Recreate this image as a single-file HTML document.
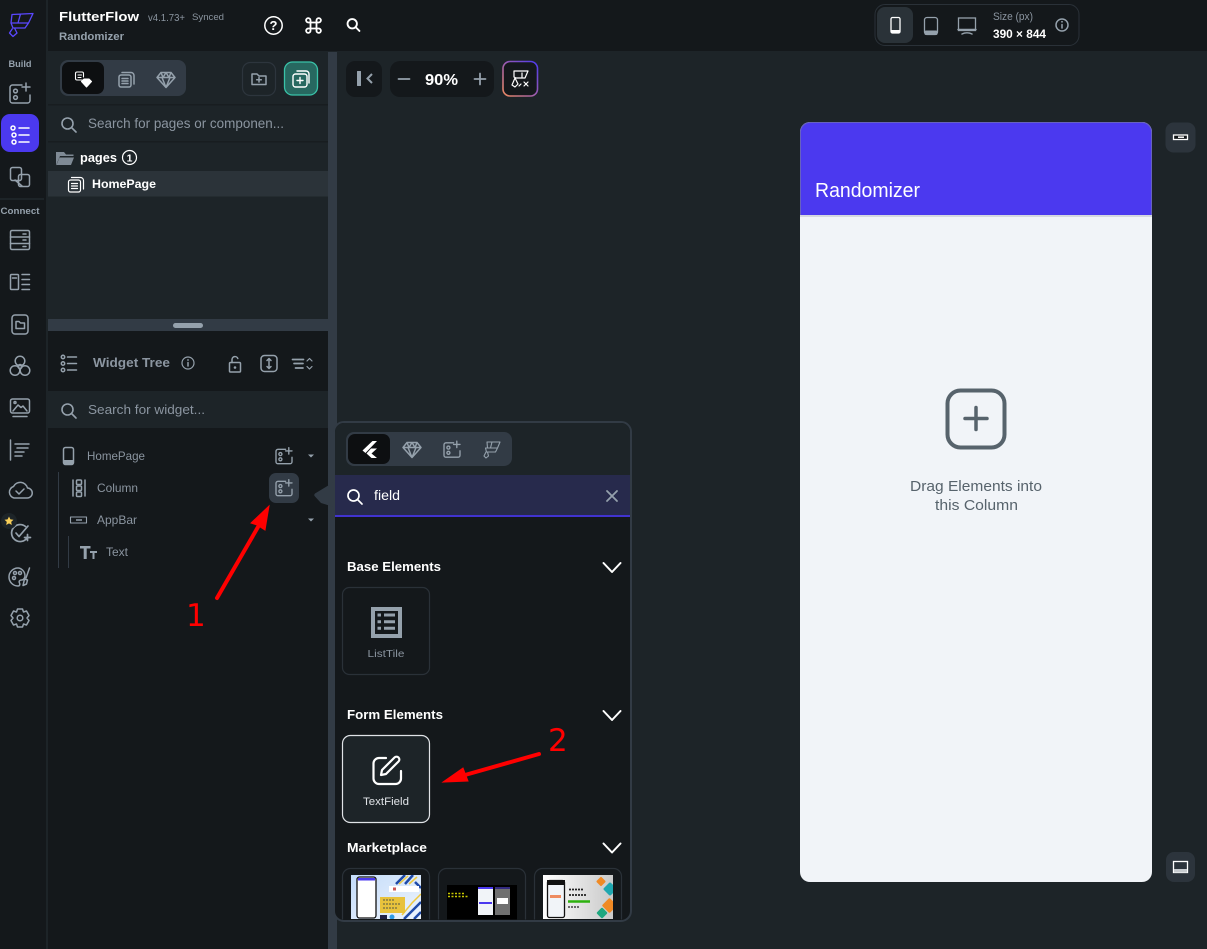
<!DOCTYPE html>
<html><head><meta charset="utf-8"><title>FlutterFlow</title>
<style>
html,body{margin:0;padding:0;background:#1d2428;width:1207px;height:949px;overflow:hidden}
svg{display:block;font-family:"Liberation Sans",sans-serif}
.i{fill:none;stroke:#95a1ac;stroke-width:1.500;stroke-linecap:round;stroke-linejoin:round}
.w{fill:none;stroke:#fff;stroke-width:1.500;stroke-linecap:round;stroke-linejoin:round}
.t{fill:#8b95a0;font-size:12px}
.b{fill:#fff;font-weight:bold;font-size:13px}
</style></head><body>
<svg width="1207" height="949" viewBox="0 0 1207 949" xmlns="http://www.w3.org/2000/svg">
<defs>
<g id="add"><path d="M2-9H-7.500a2.500 2.500 0 0 0-2.500 2.500V6.500a2.500 2.500 0 0 0 2.500 2.500H7.500a2.500 2.500 0 0 0 2.500-2.500V1"/><circle cx="-4.500" cy="-3" r="1.900"/><circle cx="-4.500" cy="3.500" r="1.900"/><path d="M6-11v8M2-7h8"/></g>
<g id="gem"><path d="M-5-7H5L9-2 0 8-9-2ZM-9-2H9M-4-2 0 8 4-2M-5-7-3-2M5-7 3-2M0-7-3-2M0-7 3-2"/></g>
<g id="srch"><circle cx="-1.500" cy="-1.500" r="5.500"/><path d="M2.500 2.500 7 7"/></g>
<g id="pg"><rect x="-7" y="-5" width="12" height="12" rx="2"/><path d="M-4-1.500h6M-4 1h6M-4 3.500h6M-4-7.500H5a3 3 0 0 1 3 3V4"/></g>
<path id="chev" d="M-8.500-4.500 0 4.500 8.500-4.500" fill="none" stroke="#fff" stroke-width="2" stroke-linecap="round" stroke-linejoin="round"/>
<path id="caret" d="M-3-1.500H3L0 1.500Z" fill="#95a1ac"/>
<linearGradient id="mg" x1="0" y1="1" x2="1" y2="0"><stop offset="0" stop-color="#ee8b60"/><stop offset=".5" stop-color="#9a5bb0"/><stop offset="1" stop-color="#4b39ef"/></linearGradient>
<linearGradient id="t1" x1="0" y1="0" x2="1" y2="1"><stop offset="0" stop-color="#c4dcfa"/><stop offset="1" stop-color="#eef4fc"/></linearGradient>
<linearGradient id="t3" x1="0" y1="0" x2="1" y2="0"><stop offset="0" stop-color="#fff"/><stop offset="1" stop-color="#c9c9c9"/></linearGradient>
<clipPath id="thumbs"><rect x="336" y="860" width="294" height="59.500"/></clipPath>
<clipPath id="pop"><rect x="335" y="423" width="295" height="497" rx="9"/></clipPath>
<clipPath id="c1"><rect x="351" y="875" width="70" height="44"/></clipPath>
<clipPath id="c3"><rect x="543" y="875" width="70" height="44"/></clipPath>
</defs>

<!-- base regions -->
<rect width="1207" height="949" fill="#1d2428"/>
<rect width="1207" height="51" fill="#14181b"/>
<rect width="46" height="949" fill="#14181b"/>
<rect x="46" y="0" width="2" height="949" fill="#1d2428"/>
<rect x="328" y="52" width="9" height="897" fill="#323b45"/>
<rect x="48" y="51" width="280" height="268" fill="#1d2428"/>
<rect x="48" y="319" width="280" height="12" fill="#323b45"/>
<rect x="173" y="323" width="30" height="5" rx="2.500" fill="#95a1ac"/>
<rect x="48" y="331" width="280" height="60" fill="#14181b"/>
<rect x="48" y="391" width="280" height="37" fill="#1d2428"/>
<rect x="48" y="428" width="280" height="521" fill="#14181b"/>

<!-- top bar -->
<text x="59" y="21" class="b" textLength="80" lengthAdjust="spacingAndGlyphs">FlutterFlow</text>
<text x="148" y="21" fill="#8b95a0" font-size="10" textLength="37" lengthAdjust="spacingAndGlyphs">v4.1.73+</text>
<text x="192" y="20" fill="#8b95a0" font-size="9.500" textLength="32" lengthAdjust="spacingAndGlyphs">Synced</text>
<text x="59" y="40" fill="#95a1ac" font-size="11" font-weight="bold" textLength="65" lengthAdjust="spacingAndGlyphs">Randomizer</text>
<circle cx="273.500" cy="25.500" r="8.700" class="w"/>
<text x="273.500" y="30" text-anchor="middle" fill="#fff" font-size="13" font-weight="bold">?</text>
<path class="w" style="stroke-width:1.800" d="M310.500 22.500v6M316.500 22.500v6M310.500 22.500h6M310.500 28.500h6M310.500 22.500h-2a2.200 2.200 0 1 1 2-2.200v2.200M316.500 22.500v-2.200a2.200 2.200 0 1 1 2 2.200h-2M310.500 28.500v2.200a2.200 2.200 0 1 1-2-2.200h2M316.500 28.500h2a2.200 2.200 0 1 1-2 2.200v-2.200"/>
<use href="#srch" transform="translate(353.500 25) scale(.85)" class="w" style="stroke-width:2.200"/>

<!-- device box -->
<rect x="875" y="4.500" width="204" height="41" rx="10" fill="#14181b" stroke="#2a3138"/>
<rect x="877" y="7" width="36" height="36" rx="8" fill="#2a3238"/>
<rect x="891" y="17.500" width="9" height="15.500" rx="1.500" fill="none" stroke="#fff" stroke-width="1.300"/><rect x="891" y="30" width="9" height="3" fill="#fff"/>
<rect x="924.500" y="17.500" width="13" height="17" rx="2.500" fill="none" stroke="#95a1ac" stroke-width="1.300"/><rect x="924.500" y="30.500" width="13" height="4.500" rx="1.500" fill="#95a1ac"/>
<rect x="958.500" y="18" width="17" height="12.500" fill="none" stroke="#95a1ac" stroke-width="1.300"/><path d="M958 29.500h18M962 34c3-1.500 7-1.500 10 0" class="i"/>
<text x="993" y="20" fill="#8b95a0" font-size="11" textLength="40" lengthAdjust="spacingAndGlyphs">Size (px)</text>
<text x="993" y="38" fill="#fff" font-size="11.500" font-weight="bold" textLength="53" lengthAdjust="spacingAndGlyphs">390 × 844</text>
<circle cx="1062" cy="25" r="6" class="i"/><path d="M1062 24.500v3.500" class="i"/><circle cx="1062" cy="21.800" r=".9" fill="#95a1ac"/>

<!-- left rail -->
<g fill="none" stroke="#5a48ff" stroke-width="1.300" stroke-linejoin="round">
<path d="M12 14.500 33 13.500 28.500 23H11ZM20.500 14 18 23M11 23h17.500L25 28H13ZM12.500 28.500 9.500 33 13 36.500 17 33 14.500 28"/>
</g>
<text x="20" y="67" text-anchor="middle" fill="#95a1ac" font-size="9" font-weight="bold" textLength="23" lengthAdjust="spacingAndGlyphs">Build</text>
<use href="#add" x="20" y="94" class="i"/>
<rect x="1" y="114" width="38" height="38" rx="9" fill="#4b39ef"/>
<g fill="none" stroke="#fff" stroke-width="1.500" stroke-linecap="round">
<circle cx="13" cy="128" r="2"/><circle cx="14" cy="135" r="2"/><circle cx="14" cy="142" r="2"/><path d="M19 128h10M19 135h10M19 142h10"/></g>
<g class="i"><rect x="10.500" y="167.500" width="11" height="13" rx="2"/><rect x="18.500" y="174.500" width="11" height="12" rx="2"/><path d="M15 180 22 186"/></g>
<rect x="0" y="198" width="44" height="2" fill="#1d2428"/>
<text x="20" y="214" text-anchor="middle" fill="#95a1ac" font-size="9" font-weight="bold" textLength="39" lengthAdjust="spacingAndGlyphs">Connect</text>
<g class="i">
<rect x="10.500" y="230.500" width="19" height="19" rx="1.500"/><path d="M10.500 237h19M10.500 243.500h19M23 234h3M23 240h3M23 246.500h3"/>
<rect x="10.500" y="274.500" width="8" height="15" rx="1"/><path d="M22 274.500h7.500M22 279.500h7.500M22 284.500h7.500M22 289.500h7.500M12.500 278h4"/>
<rect x="12" y="315" width="16" height="19" rx="3"/><path d="M16 321.500h3l1.500 1.500h4v5.500H16Z"/>
<circle cx="20" cy="361" r="4.800"/><circle cx="15" cy="370.500" r="4.800"/><circle cx="25" cy="370.500" r="4.800"/><circle cx="20" cy="366.500" r="2"/>
<rect x="10.500" y="399" width="19" height="14" rx="2"/><path d="M13 411l5-6 3 2.500 2-1.500 4 5M13 416.500h14"/><circle cx="15" cy="402.500" r="1"/>
<path d="M10.500 440v20M15 444h14M17 448h11M15 452h9M15 456h7"/>
<path d="M14 498h13a5 5 0 0 0 .5-10 7.500 7.500 0 0 0-14-1.500 6 6 0 0 0 .5 11.500ZM16 491l3 3 5-5"/>
<path style="stroke-width:1.700" d="M25.500 526.500a8.500 8.500 0 1 0 1.500 11.500M16 533l3 3.500 9-10.500M24.500 537.500h6M27.500 534.500v6"/>
<path d="M18 568a9 9 0 0 0 0 18c2 0 2-2 1.500-3-1-2 .5-3 2-3 2 0 3.500-2 3.500-4 0-5-4-8-7-8Z"/><circle cx="15" cy="573" r="1.500"/><circle cx="20" cy="573" r="1.500"/><circle cx="14" cy="578" r="1.500"/><path d="M29.500 568 26 578M24.500 579l3 1-1 4-3.500 1.500Z"/>
<path d="M17.500 609h5l1 3 3-1 2.500 4.500-2 2.500 2 2.500-2.500 4.500-3-1-1 3h-5l-1-3-3 1-2.500-4.500 2-2.500-2-2.500 2.500-4.500 3 1Z"/><circle cx="20" cy="618" r="2.800"/>
</g>
<circle cx="9" cy="521" r="8" fill="#1d2428"/>
<path d="M9 516.500l1.400 2.900 3.100.4-2.300 2.100.6 3.100-2.800-1.600-2.800 1.600.6-3.100-2.300-2.100 3.100-.4Z" fill="#f9cf58"/>

<!-- panel top -->
<rect x="60" y="60" width="126" height="36" rx="8" fill="#323b45"/>
<rect x="62" y="62" width="42" height="32" rx="7" fill="#0d0f11"/>
<g class="w" style="stroke-width:1.100"><path d="M82 80h-5a1.500 1.500 0 0 1-1.500-1.500V73.500A1.500 1.500 0 0 1 77 72h5a1.500 1.500 0 0 1 1.500 1.500V77M78 75h3.500M78 77.500h3"/><path d="M84 79h5l2.500 2.500-5 5.500-5-5.500Z" fill="#fff"/></g>
<use href="#pg" x="126" y="80" class="i"/>
<use href="#gem" x="166" y="79.500" class="i"/>
<rect x="242.500" y="62.500" width="33" height="33" rx="8" fill="none" stroke="#2d353d" stroke-width="1.200"/>
<path class="i" d="M252 74h5l2 2h7v8.500h-14ZM259 77.500v4.500M256.700 79.700h4.600"/>
<rect x="284.500" y="62" width="33" height="33" rx="8" fill="#276860" stroke="#39c2a8" stroke-width="1.300"/>
<g class="w" style="stroke-width:1.400"><rect x="293" y="74" width="14" height="13" rx="2.500"/><path d="M300 77.500v6M297 80.500h6M297 71h9a3 3 0 0 1 3 3v9"/></g>
<rect x="48" y="104" width="280" height="1.500" fill="#181d20"/>
<rect x="48" y="141" width="280" height="1.500" fill="#181d20"/>
<use href="#srch" x="69" y="125" class="i" style="stroke-width:1.600"/>
<text x="88" y="128" fill="#8b95a0" font-size="13.500" textLength="196" lengthAdjust="spacingAndGlyphs">Search for pages or componen...</text>
<path d="M56 152h8l2 2.500h7.500V156H60l-4 9.500Z" fill="#7f8a95"/><path d="M59.500 157.500H74l-3 7.500H56.500Z" fill="#7f8a95"/>
<text x="80" y="162" class="b" style="font-size:12.500px" textLength="37" lengthAdjust="spacingAndGlyphs">pages</text>
<circle cx="129.500" cy="157.500" r="7" class="w" style="stroke-width:1.200"/><text x="129.500" y="161.500" text-anchor="middle" fill="#fff" font-size="10.500" font-weight="bold">1</text>
<rect x="48" y="171" width="280" height="25.500" fill="#2b3339"/>
<use href="#pg" x="75.500" y="185" class="w" style="stroke-width:1.200"/>
<text x="92" y="188" class="b" style="font-size:12px" textLength="64" lengthAdjust="spacingAndGlyphs">HomePage</text>

<!-- widget tree header -->
<g class="i"><circle cx="63" cy="357" r="1.700"/><circle cx="63" cy="363.500" r="1.700"/><circle cx="63" cy="370" r="1.700"/><path d="M67.500 357h9M67.500 363.500h9M67.500 370h9"/></g>
<text x="93" y="367" fill="#8b95a0" font-size="13" font-weight="bold" textLength="77" lengthAdjust="spacingAndGlyphs">Widget Tree</text>
<circle cx="188" cy="363" r="6" class="i" style="stroke-width:1.200"/><path d="M188 362.500v3.500" class="i"/><circle cx="188" cy="360" r=".9" fill="#95a1ac"/>
<g class="i"><rect x="229.500" y="362.500" width="11" height="9.500" rx="1"/><path d="M232 362.500v-3a3 3 0 0 1 5.800-1"/></g><circle cx="235" cy="367.500" r="1.300" fill="#95a1ac"/>
<g class="i"><rect x="261" y="355.500" width="16" height="16" rx="3.500"/><path d="M269 359v9M267 360.500l2-2 2 2M267 366.500l2 2 2-2"/></g>
<path class="i" style="stroke-width:1.700" d="M292.500 359.500h11M294 363.500h9M295.500 368h7.500"/><path class="i" style="stroke-width:1.200" d="M307 361l2.500-2.500 2.500 2.500M307 366.500l2.500 2.500 2.500-2.500"/>
<use href="#srch" x="69" y="411" class="i" style="stroke-width:1.600"/>
<text x="88" y="414" fill="#8b95a0" font-size="13" textLength="117" lengthAdjust="spacingAndGlyphs">Search for widget...</text>

<!-- tree -->
<rect x="63.500" y="447.500" width="10" height="17" rx="2" class="i"/><rect x="64" y="460" width="9" height="4" fill="#95a1ac"/>
<text x="87" y="460" class="t" font-size="11.500" textLength="58" lengthAdjust="spacingAndGlyphs">HomePage</text>
<use href="#add" transform="translate(284 456.500) scale(.8)" class="i" style="stroke-width:1.700"/>
<use href="#caret" x="311" y="456"/>
<rect x="58" y="472" width="1" height="96" fill="#323b45"/>
<g class="i"><path d="M73 480v16M85 480v16"/><rect x="76.500" y="480" width="5" height="4.500" rx="1"/><rect x="76.500" y="486" width="5" height="4.500" rx="1"/><rect x="76.500" y="492" width="5" height="4.500" rx="1"/></g>
<text x="97" y="492" class="t" textLength="41" lengthAdjust="spacingAndGlyphs">Column</text>
<rect x="269" y="473" width="30" height="30" rx="7" fill="#323b45"/>
<use href="#add" transform="translate(284 488.500) scale(.8)" class="i" style="stroke-width:1.700"/>
<rect x="70.500" y="517" width="16" height="6" class="i" style="stroke-width:1.100"/><path d="M76 520h6" stroke="#95a1ac" stroke-width="1.500"/>
<text x="97" y="524" class="t" textLength="40" lengthAdjust="spacingAndGlyphs">AppBar</text>
<use href="#caret" x="311" y="520"/>
<rect x="68" y="536" width="1" height="32" fill="#323b45"/>
<path fill="#95a1ac" d="M80 546h10.500v2.500h-3.800V559h-3v-10.500H80ZM90 551h7v2h-2.500v6h-2v-6H90Z"/>
<text x="106" y="556" class="t" textLength="22" lengthAdjust="spacingAndGlyphs">Text</text>

<!-- canvas toolbar -->
<rect x="346" y="61" width="36" height="36" rx="9" fill="#14181b"/>
<rect x="357" y="71" width="4" height="15" fill="#95a1ac" rx=".5"/><path d="M372 74 367.500 78.500 372 83" fill="none" stroke="#95a1ac" stroke-width="2"/>
<rect x="390" y="61" width="104" height="36" rx="10" fill="#14181b"/>
<path d="M398.500 79h11M474.500 79h11M480 73.500v11" stroke="#95a1ac" stroke-width="1.800" stroke-linecap="round" fill="none"/>
<text x="425" y="85" fill="#fff" font-size="16" font-weight="bold" textLength="33" lengthAdjust="spacingAndGlyphs">90%</text>
<rect x="503" y="61.500" width="34.500" height="34.500" rx="7" fill="#14181b" stroke="url(#mg)" stroke-width="1.600"/>
<g class="w" style="stroke-width:1.200"><path d="M514 71h14l-3 7h-9l-2-1ZM515 78l-3 7 3 2 3-3-3-6M524 82l4 4M528 82l-4 4M519 86l2-2M522 73v4"/></g>

<!-- phone -->
<rect x="800" y="122" width="352" height="760" rx="10" fill="#f1f4f8"/>
<path d="M800 215V132a10 10 0 0 1 10-10H1142a10 10 0 0 1 10 10V215Z" fill="#4b39ef"/>
<path d="M800.500 215V132a9.500 9.500 0 0 1 9.500-9.500H1142a9.500 9.500 0 0 1 9.500 9.500V215" fill="none" stroke="#7a7f9c" stroke-opacity=".6"/>
<rect x="800" y="215" width="352" height="2" fill="#d5d8e0"/>
<text x="815" y="197" fill="#fff" font-size="20" textLength="105" lengthAdjust="spacingAndGlyphs">Randomizer</text>
<rect x="947.500" y="390.500" width="57" height="57" rx="13" fill="none" stroke="#57636c" stroke-width="4"/>
<path d="M965 418.500h22M976 407.500v22" stroke="#57636c" stroke-width="3.500" stroke-linecap="round"/>
<text x="910" y="491" fill="#57636c" font-size="15" textLength="132" lengthAdjust="spacingAndGlyphs">Drag Elements into</text>
<text x="935" y="510" fill="#57636c" font-size="15" textLength="83" lengthAdjust="spacingAndGlyphs">this Column</text>
<rect x="1165.500" y="122.500" width="30" height="30" rx="8" fill="#2c343c"/>
<rect x="1173.500" y="135" width="14" height="4.500" fill="#14181b" stroke="#fff" stroke-width="1.300"/><path d="M1178 137.200h6" stroke="#fff" stroke-width="1.500"/>
<rect x="1166" y="852" width="29" height="30" rx="8" fill="#2c343c"/>
<rect x="1173.500" y="861.500" width="14" height="11" fill="none" stroke="#fff" stroke-width="1.300"/><rect x="1174" y="869" width="13" height="3.500" fill="#c8ccd0"/>

<!-- popup -->
<path d="M334 482 315 493.500Q313.500 495 315 496.500L321 503 334 507Z" fill="#323b45"/>
<rect x="334" y="422" width="297" height="499" rx="10" fill="#14181b" stroke="#323b45" stroke-width="2"/>
<g clip-path="url(#pop)">
<rect x="334" y="422" width="297" height="53" fill="#1d2428"/>
<rect x="334" y="475" width="297" height="40" fill="#272a4c"/>
<rect x="334" y="515" width="297" height="2" fill="#4133d0"/>
</g>
<rect x="346" y="432" width="166" height="34" rx="8" fill="#323b45"/>
<rect x="348" y="434" width="42" height="30" rx="7" fill="#0d0f11"/>
<path fill="#fff" d="M372.500 441 362.500 450.500 365.500 453 377 441ZM371 448.500 366.500 453.500 371.500 458H377L371.500 453.500 377 448.500Z"/>
<use href="#gem" x="412" y="449.500" class="i"/>
<use href="#add" transform="translate(452 450) scale(.8)" class="i" style="stroke-width:1.700"/>
<g class="i" style="stroke-width:1.100"><path d="M487 442h13l-2.500 6h-10ZM485.500 448h12l-2 4h-9ZM486 452l-2 4 2 2 2.500-2-1-4M492 442l-1.500 6"/></g>

<use href="#srch" x="355" y="497" class="w" style="stroke-width:1.700"/>
<text x="374" y="500" fill="#fff" font-size="13.500" textLength="26" lengthAdjust="spacingAndGlyphs">field</text>
<path d="M607 491 617 501M617 491 607 501" stroke="#95a1ac" stroke-width="1.800" stroke-linecap="round"/>

<text x="347" y="571" class="b" textLength="94" lengthAdjust="spacingAndGlyphs">Base Elements</text>
<use href="#chev" x="612" y="567.500"/>
<rect x="342.500" y="587.500" width="87" height="87" rx="7" fill="none" stroke="#2a3138" stroke-width="1.200"/>
<rect x="373" y="609" width="27" height="27" fill="none" stroke="#95a1ac" stroke-width="4"/>
<path d="M377.500 615h3.500M377.500 621.700h3.500M377.500 628.300h3.500M384 615h11M384 621.700h11M384 628.300h11" stroke="#95a1ac" stroke-width="3"/>
<text x="367.500" y="657" class="t" style="font-size:10.500px" textLength="37" lengthAdjust="spacingAndGlyphs">ListTile</text>

<text x="347" y="719" class="b" textLength="96" lengthAdjust="spacingAndGlyphs">Form Elements</text>
<use href="#chev" x="612" y="715.500"/>
<rect x="342.500" y="735.500" width="87" height="87" rx="8" fill="#1d2428" stroke="#e0e3e7" stroke-width="1.200"/>
<g class="w" style="stroke-width:2.200"><path d="M386 758h-7a5.500 5.500 0 0 0-5.500 5.500V778.500a5.500 5.500 0 0 0 5.500 5.500H395.500a5.500 5.500 0 0 0 5.500-5.500V771"/><path d="M381 775l1-5 12.500-12.500a2.500 2.500 0 0 1 4 4L386 774Z"/></g>
<text x="363" y="805" fill="#e0e3e7" font-size="11" textLength="46" lengthAdjust="spacingAndGlyphs">TextField</text>

<text x="347" y="852" class="b" textLength="80" lengthAdjust="spacingAndGlyphs">Marketplace</text>
<use href="#chev" x="612" y="848"/>

<g clip-path="url(#thumbs)">
<g fill="none" stroke="#2a3138" stroke-width="1.200"><rect x="342.500" y="868.500" width="87" height="70" rx="8"/><rect x="438.500" y="868.500" width="87" height="70" rx="8"/><rect x="534.500" y="868.500" width="87" height="70" rx="8"/></g>
<!-- thumb 1 -->
<g clip-path="url(#c1)">
<rect x="351" y="875" width="70" height="46" fill="url(#t1)"/>
<g fill="none" stroke="#1f4aa8" stroke-width="2.500"><path d="M396 884l9-9M405 884l8-9M421 888l-6-6M421 902l-8 8-9 9M421 912l-7 7"/></g>
<g fill="none" stroke="#f0c93f" stroke-width="1.500"><path d="M399 884l9-8M409 884l8-7M421 894l-9 9-10 12"/></g>
<rect x="357" y="877" width="19" height="41" rx="2.500" fill="#fff" stroke="#111" stroke-width="1.300"/>
<rect x="358" y="878" width="17" height="2.500" fill="#4b39ef"/>
<rect x="389" y="886" width="30" height="6" fill="#fff"/><rect x="393" y="887.500" width="3" height="3" fill="#c55"/>
<rect x="380" y="897" width="25" height="16" fill="#e8c23c"/>
<path d="M383 900h12M383 904h18M383 908h14" stroke="#554" stroke-width="1" stroke-dasharray="2 1"/>
<rect x="380" y="915" width="7" height="4" fill="#224"/><circle cx="392" cy="917" r="2.500" fill="#2e9be6"/>
</g>
<!-- thumb 2 -->
<rect x="447" y="885" width="70" height="36" fill="#000"/>
<path d="M448 893.500h16M448 896.500h20" stroke="#c8c800" stroke-width="1.500" stroke-dasharray="2 1.500"/>
<rect x="478" y="887" width="15" height="28" fill="#f1f4f8"/><rect x="478" y="887" width="15" height="2" fill="#4b39ef"/><rect x="479" y="902" width="13" height="2" fill="#4b39ef"/>
<rect x="495" y="887" width="15" height="28" fill="#707070"/><rect x="495" y="887" width="15" height="2" fill="#332a80"/><rect x="497" y="898" width="11" height="6" fill="#fff"/>
<!-- thumb 3 -->
<g clip-path="url(#c3)">
<rect x="543" y="875" width="70" height="46" fill="url(#t3)"/>
<rect x="547.500" y="880.500" width="17" height="37" rx="2" fill="#f1f4f8" stroke="#111" stroke-width="1.300"/>
<rect x="547" y="880" width="18" height="5" fill="#111"/><rect x="550" y="895" width="11" height="3" fill="#ee8b60"/>
<path d="M569 889.500h14M569 895h17" stroke="#222" stroke-width="1.800" stroke-dasharray="2 1"/>
<path d="M568 901.500h22" stroke="#2db10e" stroke-width="2.500"/><path d="M568 907h12" stroke="#222" stroke-width="1.300" stroke-dasharray="2 1"/>
<rect x="597.500" y="878" width="7" height="7" rx="1" fill="#f08a24" transform="rotate(45 601 881.500)"/>
<rect x="605" y="884" width="10" height="10" rx="1.500" fill="#1fa7b0" transform="rotate(45 610 889)"/>
<rect x="604" y="900" width="11" height="11" rx="1.500" fill="#f08a24" transform="rotate(45 609.500 905.500)"/>
<rect x="598" y="909" width="8" height="8" rx="1" fill="#1fa77f" transform="rotate(45 602 913)"/>
</g>
</g>

<!-- annotations -->
<path d="M217 598 258 527" stroke="#f00" stroke-width="4" stroke-linecap="round" fill="none"/>
<path d="M269 506 251 523 257 525 265 530Z" fill="#f00" stroke="#f00"/>
<text x="186" y="626" fill="#f00" font-size="31" style="font-family:'DejaVu Sans',sans-serif">1</text>
<path d="M539 754 465 775" stroke="#f00" stroke-width="4" stroke-linecap="round" fill="none"/>
<path d="M443 782 463 768 468 781Z" fill="#f00" stroke="#f00"/>
<text x="548" y="751" fill="#f00" font-size="31" style="font-family:'DejaVu Sans',sans-serif">2</text>
</svg>
</body></html>
